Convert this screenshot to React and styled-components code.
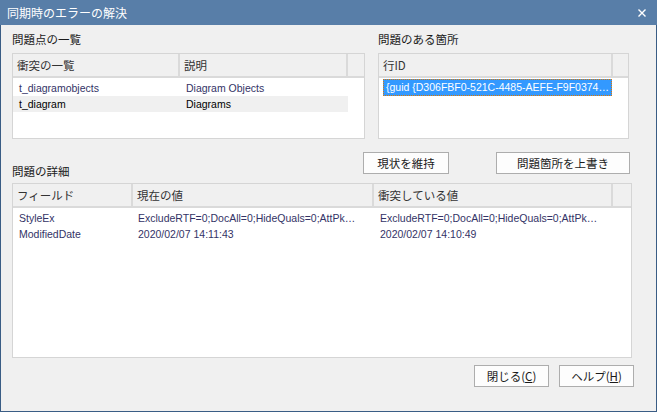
import React from 'react';
import styled, { createGlobalStyle } from 'styled-components';

const GlobalStyle = createGlobalStyle`
  html, body {
    margin: 0;
    padding: 0;
    background: #f0f0f0;
  }
  * {
    box-sizing: border-box;
  }
`;

const JP = '"Noto Sans CJK JP", "Liberation Sans", sans-serif';
const LATIN = '"Liberation Sans", "Noto Sans CJK JP", sans-serif';

const Window = styled.div`
  width: 657px;
  height: 412px;
  display: flex;
  flex-direction: column;
  background: #f0f0f0;
  font-family: ${JP};
`;

const TitleBar = styled.div`
  height: 25px;
  flex: none;
  display: flex;
  align-items: center;
  justify-content: space-between;
  padding: 0 11px 0 7px;
  background: #587ea8;
  color: #fff;
  font-size: 12px;
`;

const CloseButton = styled.svg`
  width: 8px;
  height: 8px;
  display: block;
`;

const Body = styled.div`
  flex: 1;
  padding: 6px 0 0 11px;
  border: 1px solid #3a5d85;
  border-top: none;
`;

const TopRow = styled.div`
  display: flex;
  gap: 13px;
`;

const Panel = styled.div`
  width: ${(p) => p.$width}px;
`;

const Label = styled.div`
  height: 16px;
  line-height: 16px;
  font-size: 11.5px;
  color: #1a1a1a;
  margin-bottom: ${(p) => (p.$bottom ? 4 : 6)}px;
  align-self: ${(p) => (p.$bottom ? 'flex-end' : 'auto')};
`;

const ListBox = styled.div`
  width: ${(p) => p.$width}px;
  height: ${(p) => p.$height}px;
  border: 1px solid #d5d5d5;
  background: #fff;
  overflow: hidden;
`;

const HeaderRow = styled.div`
  display: grid;
  grid-template-columns: ${(p) => p.$cols};
  height: 24px;
`;

const HeadCell = styled.div`
  background: #f0f0f0;
  border-right: 2px solid #dadada;
  border-bottom: 2px solid #dadada;
  padding-left: ${(p) => p.$pad ?? 4}px;
  line-height: 22px;
  font-size: 11.5px;
  color: #333;
  white-space: nowrap;
  overflow: hidden;

  &:last-child {
    border-right: none;
  }
`;

const Rows = styled.div`
  padding-top: ${(p) => p.$top ?? 2}px;
`;

const Row = styled.div`
  display: grid;
  grid-template-columns: ${(p) => p.$cols};
  width: ${(p) => p.$width}px;
  height: 16px;
  line-height: 16px;
  font-family: ${LATIN};
  font-size: 10.5px;
  color: ${(p) => (p.$selected ? '#000' : '#333366')};
  background: ${(p) => (p.$selected ? '#f0f0f0' : 'transparent')};
`;

const Cell = styled.div`
  padding-left: ${(p) => p.$pad ?? 6}px;
  white-space: nowrap;
  overflow: hidden;
  text-overflow: ellipsis;
`;

const FocusedRow = styled.div`
  margin: 1px 0 0 4px;
  width: 229px;
  height: 17px;
  line-height: 15px;
  padding-left: 2px;
  background: #3399ff;
  border: 1px dotted #e07800;
  color: #fff;
  font-family: ${LATIN};
  font-size: 10.5px;
  white-space: nowrap;
  overflow: hidden;
`;

const MidRow = styled.div`
  width: 618px;
  height: 31px;
  margin-top: 13px;
  display: flex;
  justify-content: space-between;
`;

const ButtonGroup = styled.div`
  display: flex;
  gap: ${(p) => p.$gap}px;
  align-self: flex-start;
`;

const Button = styled.button`
  width: ${(p) => p.$width}px;
  height: 22px;
  padding: 0;
  border: 1px solid #adadad;
  background: #fdfdfd;
  font-family: ${JP};
  font-size: 11.5px;
  color: #1a1a1a;
  cursor: default;

  u {
    text-decoration: underline;
    text-underline-offset: 1px;
  }
`;

const Footer = styled.div`
  width: 622px;
  margin-top: 7px;
  display: flex;
  justify-content: flex-end;
`;

const conflicts = [
  { table: 't_diagramobjects', desc: 'Diagram Objects' },
  { table: 't_diagram', desc: 'Diagrams', selected: true },
];

const details = [
  {
    field: 'StyleEx',
    current: 'ExcludeRTF=0;DocAll=0;HideQuals=0;AttPk…',
    conflict: 'ExcludeRTF=0;DocAll=0;HideQuals=0;AttPk…',
  },
  {
    field: 'ModifiedDate',
    current: '2020/02/07 14:11:43',
    conflict: '2020/02/07 14:10:49',
  },
];

const LEFT_COLS = '167px 168px 1fr';
const DETAIL_COLS = '120px 241px 239px 1fr';

export default function App() {
  return (
    <>
      <GlobalStyle />
      <Window>
        <TitleBar>
          <span>同期時のエラーの解決</span>
          <CloseButton viewBox="0 0 8 8">
            <path d="M0.5 0.5 L7.5 7.5 M7.5 0.5 L0.5 7.5" stroke="#fff" strokeWidth="1.4" />
          </CloseButton>
        </TitleBar>
        <Body>
          <TopRow>
            <Panel $width={353}>
              <Label>問題点の一覧</Label>
              <ListBox $width={353} $height={86}>
                <HeaderRow $cols={LEFT_COLS}>
                  <HeadCell>衝突の一覧</HeadCell>
                  <HeadCell>説明</HeadCell>
                  <HeadCell />
                </HeaderRow>
                <Rows>
                  {conflicts.map((c) => (
                    <Row key={c.table} $cols="167px 168px" $width={335} $selected={c.selected}>
                      <Cell>{c.table}</Cell>
                      <Cell>{c.desc}</Cell>
                    </Row>
                  ))}
                </Rows>
              </ListBox>
            </Panel>
            <Panel $width={251}>
              <Label>問題のある箇所</Label>
              <ListBox $width={251} $height={86}>
                <HeaderRow $cols="234px 1fr">
                  <HeadCell>行ID</HeadCell>
                  <HeadCell />
                </HeaderRow>
                <FocusedRow>{'{guid {D306FBF0-521C-4485-AEFE-F9F0374…'}</FocusedRow>
              </ListBox>
            </Panel>
          </TopRow>

          <MidRow>
            <Label $bottom>問題の詳細</Label>
            <ButtonGroup $gap={47}>
              <Button $width={86}>現状を維持</Button>
              <Button $width={134}>問題箇所を上書き</Button>
            </ButtonGroup>
          </MidRow>

          <ListBox $width={620} $height={175}>
            <HeaderRow $cols={DETAIL_COLS}>
              <HeadCell>フィールド</HeadCell>
              <HeadCell>現在の値</HeadCell>
              <HeadCell>衝突している値</HeadCell>
              <HeadCell />
            </HeaderRow>
            <Rows>
              {details.map((d) => (
                <Row key={d.field} $cols="120px 241px 239px" $width={600}>
                  <Cell $pad={6}>{d.field}</Cell>
                  <Cell $pad={5}>{d.current}</Cell>
                  <Cell $pad={6}>{d.conflict}</Cell>
                </Row>
              ))}
            </Rows>
          </ListBox>

          <Footer>
            <ButtonGroup $gap={10}>
              <Button $width={75}>
                閉じる(<u>C</u>)
              </Button>
              <Button $width={75}>
                ヘルプ(<u>H</u>)
              </Button>
            </ButtonGroup>
          </Footer>
        </Body>
      </Window>
    </>
  );
}
